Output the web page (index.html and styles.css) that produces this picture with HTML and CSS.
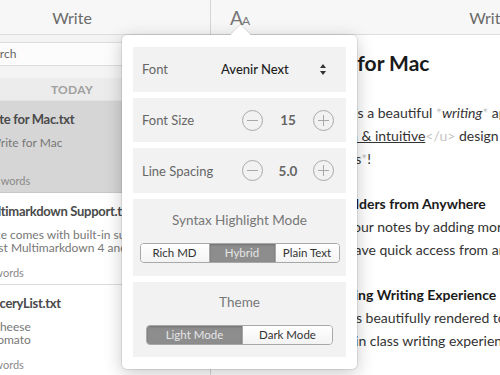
FILE: index.html
```html
<!DOCTYPE html>
<html>
<head>
  <meta charset="UTF-8">
  <title>Write</title>
  <link rel="stylesheet" href="styles.css">
</head>
<body>
  <div class="app">
    <aside class="sidebar">
      <div class="toolbar">
        <span class="toolbar-title">Write</span>
      </div>
      <div class="search">
        <div class="search-field">Search</div>
      </div>
      <div class="group-header">TODAY</div>

      <div class="note selected">
        <div class="note-title">Write for Mac.txt</div>
        <div class="note-preview"># Write for Mac</div>
        <div class="note-meta">120 words</div>
      </div>
      <div class="note">
        <div class="note-title">Multimarkdown Support.txt</div>
        <div class="note-preview">Since comes with built-in support for the<br>latest Multimarkdown 4 and</div>
        <div class="note-meta">12 words</div>
      </div>
      <div class="note">
        <div class="note-title">GroceryList.txt</div>
        <div class="note-preview">1. Cheese<br>2. Tomato</div>
        <div class="note-meta">24 words</div>
      </div>
    </aside>

    <main class="editor">
      <div class="toolbar editor-toolbar">
        <span class="font-btn">A<small>A</small></span>
        <span class="toolbar-title">Write</span>
        <span></span>
      </div>
      <div class="doc">
        <h1>Write for Mac</h1>
        <p>
          <span class="line">This app is a beautiful <span class="mark">*</span><em>writing</em><span class="mark">*</span> app with</span>
          <span class="line"><span class="mark">&lt;u&gt;</span><u>Clean &amp; intuitive</u><span class="mark">&lt;/u&gt;</span> design and</span>
          <span class="line">and <span class="mark">*</span>tools<span class="mark">*</span>!</span>
        </p>
        <p>
          <span class="line"><b>Reach Folders from Anywhere</b></span>
          <span class="line">Handle your notes by adding more folders</span>
          <span class="line">and we have quick access from anywhere</span>
        </p>
        <p>
          <span class="line"><b>An Amazing Writing Experience</b></span>
          <span class="line">Content is beautifully rendered to give</span>
          <span class="line">and best in class writing experience</span>
        </p>
      </div>
    </main>

    <div class="popover">
      <div class="pop-row">
        <span class="pop-label">Font</span>
        <span class="pop-value">Avenir Next</span>
        <svg class="updown" width="6" height="11" viewBox="0 0 6 11"><path d="M0 4L3 0L6 4Z M0 7L3 11L6 7Z" fill="#333"/></svg>
      </div>
      <div class="pop-row">
        <span class="pop-label">Font Size</span>
        <div class="stepper">
          <svg width="21" height="21" viewBox="0 0 21 21"><circle cx="10.5" cy="10.5" r="10" fill="none" stroke="#a8a8a8"/><path d="M5 10.5h11" stroke="#a8a8a8"/></svg>
          <span class="stepper-value">15</span>
          <svg width="21" height="21" viewBox="0 0 21 21"><circle cx="10.5" cy="10.5" r="10" fill="none" stroke="#a8a8a8"/><path d="M5 10.5h11M10.5 5v11" stroke="#a8a8a8"/></svg>
        </div>
      </div>
      <div class="pop-row">
        <span class="pop-label">Line Spacing</span>
        <div class="stepper">
          <svg width="21" height="21" viewBox="0 0 21 21"><circle cx="10.5" cy="10.5" r="10" fill="none" stroke="#a8a8a8"/><path d="M5 10.5h11" stroke="#a8a8a8"/></svg>
          <span class="stepper-value">5.0</span>
          <svg width="21" height="21" viewBox="0 0 21 21"><circle cx="10.5" cy="10.5" r="10" fill="none" stroke="#a8a8a8"/><path d="M5 10.5h11M10.5 5v11" stroke="#a8a8a8"/></svg>
        </div>
      </div>
      <div class="pop-block">
        <div class="pop-title">Syntax Highlight Mode</div>
        <div class="segmented syntax">
          <span>Rich MD</span>
          <span class="active">Hybrid</span>
          <span>Plain Text</span>
        </div>
      </div>
      <div class="pop-block">
        <div class="pop-title">Theme</div>
        <div class="segmented theme">
          <span class="active">Light Mode</span>
          <span>Dark Mode</span>
        </div>
      </div>
    </div>
  </div>
</body>
</html>
```

FILE: styles.css
```css
* {
  box-sizing: border-box;
  margin: 0;
  padding: 0;
}

html, body {
  width: 500px;
  height: 375px;
  overflow: hidden;
}

body {
  font-family: 'Lato', 'Noto Sans', sans-serif;
  color: #333;
  background: #fff;
}

.app {
  position: relative;
  display: flex;
  width: 500px;
  height: 375px;
  overflow: hidden;
}

/* toolbars */
.toolbar {
  height: 35px;
  flex: 0 0 35px;
  background: #f7f7f7;
  border-bottom: 1px solid #dedede;
  display: flex;
  align-items: center;
  justify-content: center;
}

.toolbar-title {
  font-size: 16px;
  color: #6a6a6a;
}

/* sidebar */
.sidebar {
  flex: 0 0 277px;
  margin-left: -66px;
  border-right: 1px solid #d6d6d6;
  display: flex;
  flex-direction: column;
  background: #fff;
}

.search {
  background: #f4f4f4;
  padding: 7px 10px 12px;
}

.search-field {
  height: 24px;
  background: #fcfcfc;
  border: 1px solid #dcdcdc;
  border-radius: 3px;
  padding-left: 36px;
  font-size: 12px;
  line-height: 22px;
  color: #666;
}

.group-header {
  height: 23px;
  background: #ececec;
  color: #a0a0a0;
  font-size: 12px;
  font-weight: 700;
  letter-spacing: 0.3px;
  text-align: center;
  line-height: 24px;
  border-bottom: 1px solid #e2e2e2;
}

.note {
  height: 92px;
  flex: 0 0 92px;
  padding: 9px 8px 0 45px;
  border-bottom: 1px solid #dcdcdc;
  white-space: nowrap;
  overflow: hidden;
}

.note.selected {
  background: #d6d6d6;
  border-bottom-color: #c9c9c9;
}

.note-title {
  font-size: 13px;
  font-weight: 700;
  letter-spacing: -0.3px;
  color: #4a4a4a;
  line-height: 18px;
}

.note-preview {
  margin-top: 8px;
  height: 26px;
  font-size: 12px;
  line-height: 13px;
  color: #777;
}

.note-meta {
  margin-top: 12px;
  font-size: 11px;
  line-height: 14px;
  color: #8a8a8a;
}

/* editor */
.editor {
  flex: 0 0 556px;
  display: flex;
  flex-direction: column;
}

.editor-toolbar {
  display: grid;
  grid-template-columns: 1fr auto 1fr;
}

.font-btn {
  padding-left: 19px;
  font-size: 19px;
  color: #777;
  letter-spacing: -1px;
}

.font-btn small {
  font-size: 12px;
}

.doc {
  padding: 14px 0 0 88px;
  white-space: nowrap;
  overflow: hidden;
}

.doc h1 {
  font-size: 21px;
  font-weight: 700;
  line-height: 28px;
  color: #1a1a1a;
}

.doc p {
  margin-top: 22px;
  font-size: 14px;
  line-height: 23px;
  color: #333;
}

.doc h1 + p {
  margin-top: 24px;
}

.line {
  display: block;
}

.line b {
  color: #1a1a1a;
}

.mark {
  color: #c4c4c4;
}

/* popover */
.popover {
  position: absolute;
  left: 122px;
  top: 35px;
  width: 235px;
  height: 334px;
  background: #fff;
  border-radius: 5px;
  padding: 12px 11px;
  display: flex;
  flex-direction: column;
  gap: 6px;
  box-shadow: 0 0 0 1px rgba(0, 0, 0, 0.08), 0 4px 18px rgba(0, 0, 0, 0.22);
}

.popover::before {
  content: '';
  position: absolute;
  left: 111px;
  top: -7px;
  width: 15px;
  height: 15px;
  background: #fff;
  transform: rotate(45deg);
  box-shadow: -1px -1px 0 rgba(0, 0, 0, 0.06);
}

.pop-row {
  height: 45px;
  background: #f2f2f2;
  display: flex;
  align-items: center;
  padding: 0 12px 0 9px;
}

.pop-label {
  font-size: 13px;
  color: #666;
  flex: 1;
}

.pop-row:first-child .pop-label {
  flex: 0 0 79px;
}

.pop-value {
  flex: 1;
  font-size: 13px;
  font-weight: 500;
  color: #1e1e1e;
}

.updown {
  margin-right: 8px;
}

.stepper {
  display: flex;
  align-items: center;
}

.stepper svg {
  display: block;
}

.stepper-value {
  width: 50px;
  text-align: center;
  font-size: 13.5px;
  font-weight: 700;
  color: #666;
}

.pop-block {
  background: #f2f2f2;
  display: flex;
  flex-direction: column;
  align-items: center;
  padding: 12px 0 13px;
}

.pop-block + .pop-block {
  padding: 11px 0 12px;
}

.pop-title {
  font-size: 13.5px;
  line-height: 18px;
  color: #777;
}

.segmented {
  margin-top: 14px;
  display: grid;
  height: 20px;
  border: 1px solid #a8a8a8;
  border-radius: 4px;
  overflow: hidden;
}

.segmented.syntax {
  grid-template-columns: 68px 66px 64px;
}

.segmented.theme {
  grid-template-columns: 95px 90px;
}

.segmented span {
  font-size: 11.5px;
  line-height: 18px;
  text-align: center;
  color: #333;
  background: linear-gradient(#ffffff, #f3f3f3);
}

.segmented span + span {
  border-left: 1px solid #a8a8a8;
}

.segmented span.active {
  background: #8d8d8d;
  color: #e6e6e6;
  box-shadow: inset 0 1px 2px rgba(0, 0, 0, 0.2);
}
```
